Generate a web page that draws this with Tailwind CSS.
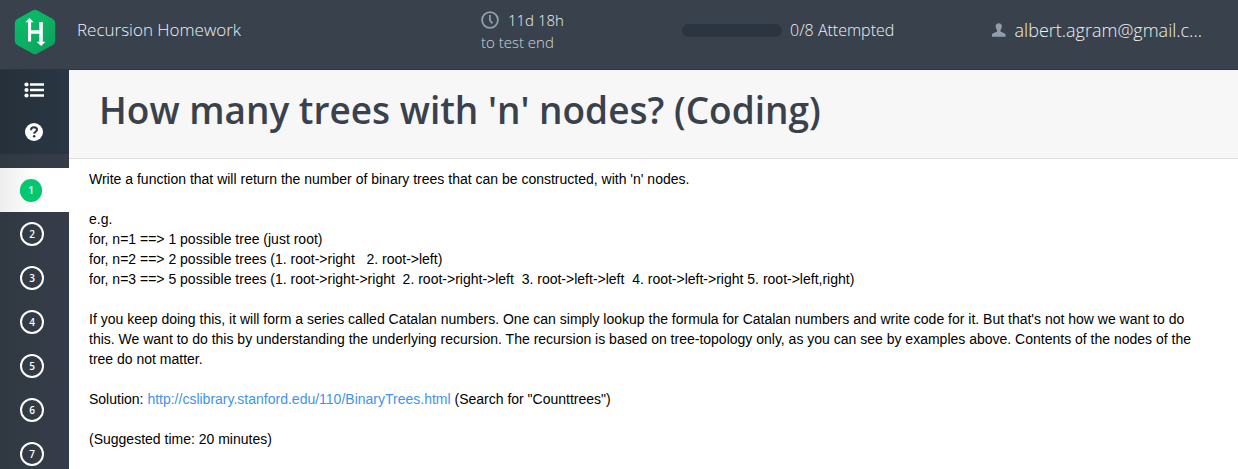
<!DOCTYPE html>
<html lang="en">
<head>
<meta charset="utf-8">
<meta name="viewport" content="width=device-width, initial-scale=1">
<title>Recursion Homework</title>
<script src="https://cdn.jsdelivr.net/npm/@tailwindcss/browser@4"></script>
</head>
<body class="flex h-screen flex-col overflow-hidden bg-white font-['Open_Sans',sans-serif]">
<header class="flex h-[70px] shrink-0 items-start border-b border-[#2a3541] bg-[#39424c] pr-9 text-[#eef0f2]">
  <div class="flex h-[60px] flex-1 items-center">
    <a href="#" aria-label="Home" class="mt-[3px] ml-[14px] block">
      <svg class="h-[46px] w-[42px]" viewBox="0 0 42 46">
        <defs><linearGradient id="g" x1="0" y1="0" x2="1" y2="1"><stop offset="0" stop-color="#06bd68"/><stop offset=".45" stop-color="#0bb566"/><stop offset="1" stop-color="#0c9e5c"/></linearGradient></defs>
        <path d="M18.600 1.400q2.400-1.300 4.800 0l15.500 8.700q2.300 1.300 2.300 4v17.800q0 2.700-2.300 4l-15.500 8.700q-2.400 1.300-4.800 0L3.100 35.900q-2.300-1.300-2.300-4V14.100q0-2.700 2.300-4z" fill="url(#g)"/>
        <path d="M.8 21 41.200 35 21 45.500 3.100 35.900.8 32z" fill="#0a9f5b" opacity=".15"/>
        <path d="M14 13h3.100v8.300h8.200V13h3.500v19.800h2.700L27.100 37l-4.500-4.200h2.700v-8h-8.200v7.700H14V13.200h-2.800L15.600 9l4.100 4.200h-2.600z" fill="#fff"/>
      </svg>
    </a>
    <span class="ml-[21px] text-[17px] font-light">Recursion Homework</span>
  </div>
  <div class="w-[201px] shrink-0 pt-[9px] text-[15px] leading-[22px] font-light">
    <div class="flex items-center">
      <svg class="mr-[9px] h-[18px] w-[18px]" viewBox="0 0 18 18" fill="none" stroke="#929eae" stroke-width="1.800"><circle cx="9" cy="9" r="7.900"/><path d="M8.900 4v5.200l2.500 3.200"/></svg>
      <span>11d 18h</span>
    </div>
    <div class="text-[#d2d6da]">to test end</div>
  </div>
  <div class="flex h-[60px] w-[310px] shrink-0 items-center">
    <div role="progressbar" aria-label="Attempted" aria-valuemin="0" aria-valuemax="8" aria-valuenow="0" class="h-[13px] w-[100px] rounded-full bg-[#2a3541]"></div>
    <span class="ml-2 text-[16px] font-light">0/8 Attempted</span>
  </div>
  <button type="button" class="flex h-[60px] w-[210px] shrink-0 items-center">
    <svg class="mr-[9px] h-4 w-4" viewBox="0 0 16 16"><path d="M8 0c2.400 0 3.800 1.500 3.600 3.900-.1 2-1 3.300-1.600 4.300v1.600c.3 1.100 5.600 1.300 6 3.700V16H0v-2.500c.4-2.400 5.700-2.600 6-3.700V8.200C5.400 7.200 4.500 5.900 4.400 3.900 4.200 1.500 5.600 0 8 0z" fill="#929eae"/></svg>
    <span class="text-[18px] font-light">albert.agram@gmail.c...</span>
  </button>
</header>
<div class="flex min-h-0 flex-1">
  <nav aria-label="Questions" class="w-[69px] shrink-0 bg-linear-to-r from-[#303942] to-[#363d49]">
    <div class="flex h-[84px] flex-col items-center bg-linear-to-r from-[#26303a] to-[#293643] pt-3 pr-[2px]">
      <button type="button" aria-label="Question list">
        <svg class="h-4 w-5" viewBox="0 0 20 16" fill="#fff"><circle cx="2.500" cy="2.500" r="2.100"/><circle cx="2.500" cy="8" r="2.100"/><circle cx="2.500" cy="13.500" r="2.100"/><path d="M6 1.200h14v2.600H6zM6 6.700h14v2.600H6zM6 12.200h14v2.600H6z"/></svg>
      </button>
      <button type="button" aria-label="Help" class="mt-[25px]">
        <svg class="h-[18px] w-[18px]" viewBox="0 0 18 18"><circle cx="9" cy="9" r="9" fill="#fff"/><path d="M6 7.200C6 5.200 7.200 4.200 9 4.200s3 1 3 2.600c0 2-2.800 2-2.800 4" fill="none" stroke="#293643" stroke-width="2"/><circle cx="9.200" cy="13.300" r="1.250" fill="#293643"/></svg>
      </button>
    </div>
    <div class="mt-[14px] text-[10px] leading-none font-semibold text-white">
      <a href="#" aria-current="page" class="flex h-11 items-center bg-linear-to-r from-[#ededed] to-white to-50% pl-5"><span class="flex h-[23px] w-[22px] items-center justify-center rounded-full bg-[#00c86f]">1</span></a>
      <a href="#" class="flex h-11 items-center pl-5"><span class="flex size-6 items-center justify-center rounded-full border-2 border-white">2</span></a>
      <a href="#" class="flex h-11 items-center pl-5"><span class="flex size-6 items-center justify-center rounded-full border-2 border-white">3</span></a>
      <a href="#" class="flex h-11 items-center pl-5"><span class="flex size-6 items-center justify-center rounded-full border-2 border-white">4</span></a>
      <a href="#" class="flex h-11 items-center pl-5"><span class="flex size-6 items-center justify-center rounded-full border-2 border-white">5</span></a>
      <a href="#" class="flex h-11 items-center pl-5"><span class="flex size-6 items-center justify-center rounded-full border-2 border-white">6</span></a>
      <a href="#" class="flex h-11 items-center pl-5"><span class="flex size-6 items-center justify-center rounded-full border-2 border-white">7</span></a>
    </div>
  </nav>
  <main class="min-w-0 flex-1">
    <div class="flex h-[89px] items-center border-b border-[#dedede] bg-[#f7f7f7] pb-[10px] pl-[30px]">
      <h1 class="text-[37px] leading-none font-semibold whitespace-nowrap text-[#39424c]">How many trees with 'n' nodes? (Coding)</h1>
    </div>
    <div class="space-y-5 pt-[10px] pr-9 pl-5 font-['Liberation_Sans',Arial,sans-serif] text-[14px] leading-5 text-black">
      <p>Write a function that will return the number of binary trees that can be constructed, with 'n' nodes.</p>
      <p class="whitespace-pre-wrap">e.g.
for, n=1 ==&gt; 1 possible tree (just root)
for, n=2 ==&gt; 2 possible trees (1. root-&gt;right   2. root-&gt;left)
for, n=3 ==&gt; 5 possible trees (1. root-&gt;right-&gt;right  2. root-&gt;right-&gt;left  3. root-&gt;left-&gt;left  4. root-&gt;left-&gt;right 5. root-&gt;left,right)</p>
      <p>If you keep doing this, it will form a series called Catalan numbers. One can simply lookup the formula for Catalan numbers and write code for it. But that's not how we want to do this. We want to do this by understanding the underlying recursion. The recursion is based on tree-topology only, as you can see by examples above. Contents of the nodes of the tree do not matter.</p>
      <p>Solution: <a href="http://cslibrary.stanford.edu/110/BinaryTrees.html" class="text-[#4194ec]">http://cslibrary.stanford.edu/110/BinaryTrees.html</a> (Search for "Counttrees")</p>
      <p>(Suggested time: 20 minutes)</p>
    </div>
  </main>
</div>
</body>
</html>
